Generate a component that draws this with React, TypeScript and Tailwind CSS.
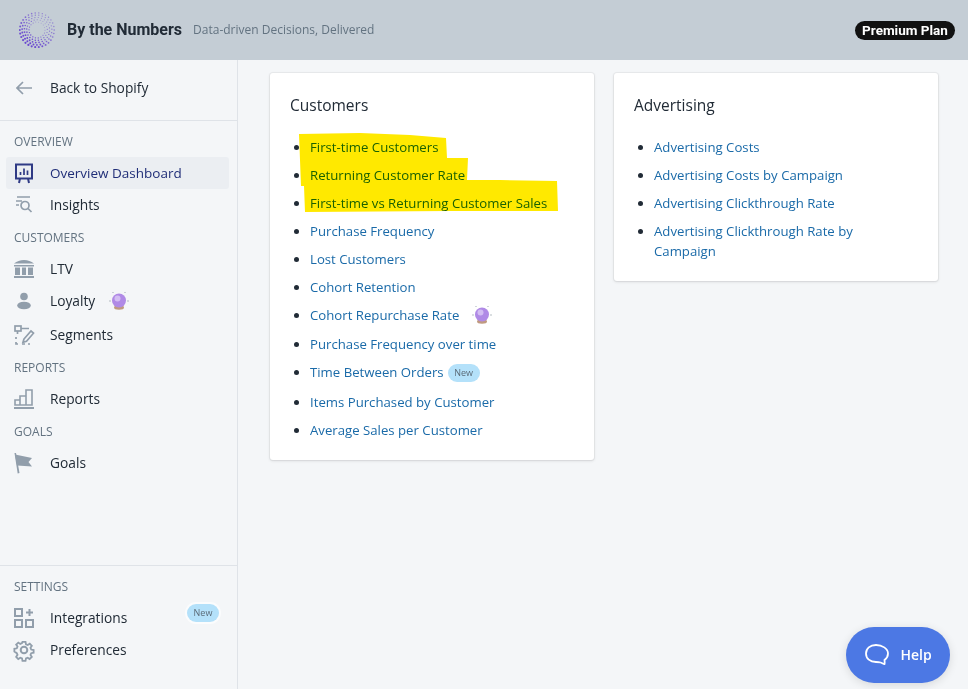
import type { ReactNode } from 'react';

const customerLinks = [
  'First-time Customers',
  'Returning Customer Rate',
  'First-time vs Returning Customer Sales',
  'Purchase Frequency',
  'Lost Customers',
  'Cohort Retention',
];

function LogoMark() {
  const dots: { x: number; y: number; r: number; o: number }[] = [];
  for (let ring = 0; ring < 5; ring++) {
    const radius = 17.2 - ring * 2.3;
    const count = 30 - ring * 3;
    for (let i = 0; i < count; i++) {
      const a = (i / count) * Math.PI * 2 + ring * 0.18;
      const fade = (Math.cos(a - 2.3) + 1) / 2;
      dots.push({
        x: 18 + Math.cos(a) * radius,
        y: 18 + Math.sin(a) * radius,
        r: (1.1 - ring * 0.1) * (0.6 + fade * 0.4),
        o: 0.55 + fade * 0.45,
      });
    }
  }
  return (
    <svg width="36" height="36" viewBox="0 0 36 36" className="shrink-0">
      {dots.map((d, i) => (
        <circle key={i} cx={d.x} cy={d.y} r={d.r} fill="#6a48d0" opacity={d.o} />
      ))}
    </svg>
  );
}

function CrystalBall() {
  return (
    <svg width="20" height="20" viewBox="0 0 20 20">
      <ellipse cx="10" cy="16.500" rx="5" ry="2.200" fill="#c09a80" />
      <circle cx="10" cy="9.500" r="7" fill="#b08ae6" />
      <circle cx="8.500" cy="7.500" r="3" fill="#d3bdf3" />
      <circle cx="1" cy="10" r="0.700" fill="#9aa5ad" />
      <circle cx="19" cy="10" r="0.700" fill="#9aa5ad" />
      <circle cx="4" cy="1.500" r="0.600" fill="#9aa5ad" />
      <circle cx="16" cy="1.500" r="0.600" fill="#9aa5ad" />
    </svg>
  );
}

function NewBadge({ className = '' }: { className?: string }) {
  return (
    <span className={`inline-flex h-[18px] w-8 items-center justify-center rounded-full bg-[#b4e1fa] text-[9px] text-[#5b6b78] ${className}`}>
      New
    </span>
  );
}

const iconColor = '#919eab';

const icons: Record<string, ReactNode> = {
  dashboard: (
    <g stroke="#2f3a85" strokeWidth="2" fill="none">
      <path d="M1 1.500h18M2 1.500v14h16v-14M6 15.500 5 20M14 15.500l1 4.500" />
      <path d="M6.500 12V9M10 12V5.500M13.500 12V7.500" strokeWidth="1.700" />
    </g>
  ),
  insights: (
    <g stroke={iconColor} strokeWidth="1.700" fill="none">
      <path d="M3 2h13M2 6h6M2 10h3" />
      <circle cx="11" cy="10.500" r="4" />
      <path d="m14 13.500 3.500 3.500" />
    </g>
  ),
  bank: (
    <g fill={iconColor}>
      <path d="M10 1c4 0 7 1.500 10 3.500H0C3 2.500 6 1 10 1z" />
      <path d="M0 6h20v1.500H0zM0 17h20v2H0zM1 8.500h5V16H1zM8 8.500h4V16H8zM14 8.500h5V16h-5z" />
    </g>
  ),
  person: (
    <g fill={iconColor}>
      <circle cx="10" cy="5.500" r="3.800" />
      <ellipse cx="10" cy="14.500" rx="6.800" ry="3.800" />
    </g>
  ),
  segments: (
    <g stroke={iconColor} strokeWidth="1.700" fill="none">
      <rect x="1" y="1" width="6" height="5" />
      <path d="M7 3.500h8M3.500 6v3M2 12v2M2 17v2h2M8 19h3M14 19h2" />
      <path d="m10 14 7-8 2.500 2.200-7 8-3.500 1z" />
    </g>
  ),
  reports: (
    <g stroke={iconColor} strokeWidth="1.600" fill="none">
      <path d="M1 11h5v5H1zM6 7h6v9H6zM12 1h6v15h-6z" />
      <path d="M0 19h20" strokeWidth="2" />
    </g>
  ),
  flag: (
    <g fill={iconColor}>
      <path d="M.500 0 2 0 5.500 20l-1.800.500z" />
      <path d="m1 1.500 17 3.500-3.500 4 3.500 4.500-15-1z" />
    </g>
  ),
  integrations: (
    <g stroke={iconColor} strokeWidth="2" fill="none">
      <rect x="1" y="1" width="7" height="7" />
      <rect x="1" y="12" width="7" height="7" />
      <rect x="12" y="12" width="7" height="7" />
      <path d="M15.500 1v7M12 4.500h7" />
    </g>
  ),
  gear: (
    <g stroke={iconColor} strokeWidth="2" fill="none">
      <circle cx="10" cy="10" r="3.300" />
      <path d="M8.300 1h3.400l.5 2.700 1.900.8 2.300-1.500 2.300 2.400-1.500 2.200.8 1.900 2.700.5v3l-2.700.6-.8 1.900 1.500 2.200-2.400 2.300-2.200-1.500-1.900.8-.5 2.700H8.300l-.5-2.700-1.900-.8-2.300 1.500-2.300-2.400 1.500-2.200-.8-1.900L-.7 11.700v-3l2.700-.6.800-1.900L1.300 4l2.400-2.300 2.200 1.500 1.900-.8z" transform="translate(1 1) scale(.9)" />
    </g>
  ),
};

function NavItem({ icon, label, active, children, className = '' }: { icon: string; label: string; active?: boolean; children?: ReactNode; className?: string }) {
  return (
    <div className={`relative ml-1.5 mr-2 flex h-8 items-center gap-4 rounded-[3px] pl-2 ${active ? 'bg-[#ebeef2] text-[13.5px] font-medium text-[#202e78]' : 'text-[13.75px] text-[#212b36]'} ${className}`}>
      <svg width="20" height="21" viewBox="0 0 20 21" className="shrink-0 overflow-visible">{icons[icon]}</svg>
      <span>{label}</span>
      {children}
    </div>
  );
}

function SectionLabel({ children }: { children: ReactNode }) {
  return <div className="flex h-8 items-center pl-3.5 pt-0.5 text-xs uppercase text-[#637381]">{children}</div>;
}

function Sidebar() {
  return (
    <aside className="flex w-[238px] shrink-0 flex-col border-r border-[#dfe3e8] bg-[#f4f6f8]">
      <div className="flex h-[61px] items-center gap-[18px] border-b border-[#dfe3e8] pb-[5px] pl-4 text-[13.75px] font-medium text-[#212b36]">
        <svg width="16" height="14" viewBox="0 0 16 14" fill="none" stroke={iconColor} strokeWidth="1.700">
          <path d="M16 7H1M7 1 1 7l6 6" />
        </svg>
        Back to Shopify
      </div>
      <div className="pt-1">
        <SectionLabel>Overview</SectionLabel>
        <NavItem icon="dashboard" label="Overview Dashboard" active />
        <NavItem icon="insights" label="Insights" />
        <SectionLabel>Customers</SectionLabel>
        <NavItem icon="bank" label="LTV" />
        <NavItem icon="person" label="Loyalty">
          <span className="-ml-0.5"><CrystalBall /></span>
        </NavItem>
        <NavItem icon="segments" label="Segments" className="mt-0.5" />
        <SectionLabel>Reports</SectionLabel>
        <NavItem icon="reports" label="Reports" />
        <SectionLabel>Goals</SectionLabel>
        <NavItem icon="flag" label="Goals" />
      </div>
      <div className="mt-auto border-t border-[#dfe3e8] pb-[23px] pt-1">
        <SectionLabel>Settings</SectionLabel>
        <NavItem icon="integrations" label="Integrations">
          <NewBadge className="absolute right-2.5 top-0.5 ring-2 ring-[#fbfcfd]" />
        </NavItem>
        <NavItem icon="gear" label="Preferences" />
      </div>
    </aside>
  );
}

function Card({ title, children }: { title: string; children: ReactNode }) {
  return (
    <section className="relative w-[324px] rounded-[3px] bg-white p-5 shadow-[0_0_0_1px_rgba(63,63,68,0.05),0_1px_3px_0_rgba(63,63,68,0.15)]">
      <h2 className="mb-5 text-[15.5px] leading-6 font-medium text-[#212b36]">{title}</h2>
      {children}
    </section>
  );
}

function ListLink({ children, className = 'mb-2' }: { children: ReactNode; className?: string }) {
  return (
    <li className={`text-[#212b36] ${className}`}>
      <a className="text-[#1a6aa8]">{children}</a>
    </li>
  );
}

export default function App() {
  return (
    <div className="relative flex h-screen flex-col overflow-hidden bg-[#f4f6f8] font-['Open_Sans','Noto_Sans',sans-serif] text-[13.2px] leading-5">
      <header className="flex h-[60px] shrink-0 items-center bg-[#c4cdd5] pl-[19px] pr-[13px]">
        <LogoMark />
        <span className="ml-3 font-['Roboto',sans-serif] text-[16px] font-bold text-[#212b36]">By the Numbers</span>
        <span className="ml-[11px] text-xs text-[#637381]">Data-driven Decisions, Delivered</span>
        <span className="ml-auto flex h-[19px] w-[100px] items-center justify-center rounded-full bg-[#111111] font-['Roboto',sans-serif] text-[13.5px] font-bold text-white">Premium Plan</span>
      </header>
      <div className="flex min-h-0 flex-1">
        <Sidebar />
        <main className="flex flex-1 items-start gap-5 pl-8 pt-[13px]">
          <Card title="Customers">
            <ul className="list-disc pl-5">
              {customerLinks.map((link) => (
                <ListLink key={link}>{link}</ListLink>
              ))}
              <li className="mb-2 text-[#212b36]">
                <span className="flex items-center gap-[13px]">
                  <a className="text-[#1a6aa8]">Cohort Repurchase Rate</a>
                  <span className="-my-1"><CrystalBall /></span>
                </span>
              </li>
              <ListLink className="mb-2 mt-[9px]">Purchase Frequency over time</ListLink>
              <li className="mb-2.5 text-[#212b36]">
                <a className="text-[#1a6aa8]">Time Between Orders</a>
                <NewBadge className="ml-1 align-middle" />
              </li>
              <ListLink>Items Purchased by Customer</ListLink>
              <ListLink className="mb-0">Average Sales per Customer</ListLink>
            </ul>
            <svg className="absolute left-0 top-0 mix-blend-multiply" width="324" height="160" viewBox="0 0 324 160">
              <path d="M29 61 90 60 140 62 176 65 177 85 198 85 197 107 230 107 287 108 288 138 180 138 35 139 34 113 31 113 30 87z" fill="#ffe900" />
            </svg>
          </Card>
          <Card title="Advertising">
            <ul className="list-disc pl-5 pr-2">
              <ListLink>Advertising Costs</ListLink>
              <ListLink>Advertising Costs by Campaign</ListLink>
              <ListLink>Advertising Clickthrough Rate</ListLink>
              <ListLink className="mb-0">Advertising Clickthrough Rate by Campaign</ListLink>
            </ul>
          </Card>
        </main>
      </div>
      <div className="absolute bottom-1.5 right-[18px] flex h-14 w-[104px] items-center justify-center gap-2.5 rounded-full bg-[#4c78e4] text-sm font-semibold text-white shadow-[0_2px_10px_rgba(0,0,0,0.12)]">
        <svg width="26" height="24" viewBox="0 0 26 24" fill="none" stroke="white" strokeWidth="1.800">
          <path d="M12 2C6 2 2 5.500 2 10.500S6 19 12 19c2 0 3 0 4.500.5 1.500.5 3 1.500 4 1.500.5-1.500 0-3 0-4 2-1.500 3.500-4 3.500-6.500C24 5.500 18 2 12 2z" />
        </svg>
        Help
      </div>
    </div>
  );
}
